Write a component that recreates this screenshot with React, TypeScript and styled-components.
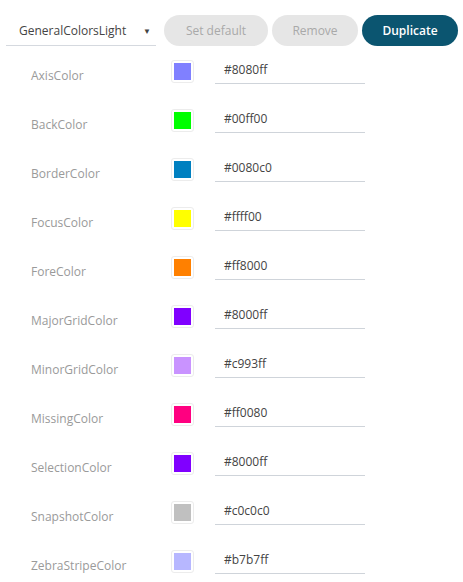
import React from "react";
import styled, { createGlobalStyle } from "styled-components";

const Global = createGlobalStyle`
  html, body { margin: 0; padding: 0; background: #fff; }
  body { font-family: "Open Sans", "Noto Sans", sans-serif; }
`;

const Page = styled.div`
  width: 463px;
  height: 582px;
  overflow: hidden;
  background: #fff;
`;

const Toolbar = styled.div`
  display: flex;
  align-items: center;
  padding: 15px 0 0 6px;
  height: 31px;
`;

const Select = styled.div`
  width: 150px;
  height: 31px;
  box-sizing: border-box;
  border-bottom: 1px solid #d5d9df;
  display: flex;
  align-items: center;
  justify-content: space-between;
  padding: 0 5px 0 13px;
  font-size: 12px;
  color: #444;
  margin-right: 8px;
`;

const Caret = styled.span`
  font-size: 8px;
  color: #444;
`;

const Button = styled.button<{ $primary?: boolean; $w: number }>`
  width: ${(p) => p.$w}px;
  height: 31px;
  border: none;
  border-radius: 16px;
  margin-right: 4px;
  font-family: "Open Sans", "Noto Sans", sans-serif;
  font-size: 12px;
  font-weight: ${(p) => (p.$primary ? 600 : 400)};
  background: ${(p) => (p.$primary ? "#0b5570" : "#e6e6e6")};
  color: ${(p) => (p.$primary ? "#fff" : "#a9a9a9")};
  padding: 0;
`;

const List = styled.div`
  display: flex;
  flex-direction: column;
  padding-top: 14px;
`;

const Row = styled.div`
  display: flex;
  height: 49px;
  align-items: flex-start;
`;

const Label = styled.div`
  width: 140px;
  padding-left: 31px;
  font-size: 12px;
  color: #9a9a9a;
  line-height: 23px;
  padding-top: 4px;
`;

const Swatch = styled.div`
  width: 23px;
  height: 23px;
  box-sizing: border-box;
  border: 1px solid #ececec;
  border-radius: 3px;
  padding: 2px;
  background: #fff;
  margin-right: 21px;
`;

const SwatchFill = styled.div<{ $c: string }>`
  width: 100%;
  height: 100%;
  background: ${(p) => p.$c};
`;

const Input = styled.div`
  width: 150px;
  height: 24px;
  box-sizing: border-box;
  border-bottom: 1px solid #cfd4da;
  padding-left: 9px;
  font-size: 12px;
  color: #444;
  line-height: 20px;
`;

const colors: [string, string][] = [
  ["AxisColor", "#8080ff"],
  ["BackColor", "#00ff00"],
  ["BorderColor", "#0080c0"],
  ["FocusColor", "#ffff00"],
  ["ForeColor", "#ff8000"],
  ["MajorGridColor", "#8000ff"],
  ["MinorGridColor", "#c993ff"],
  ["MissingColor", "#ff0080"],
  ["SelectionColor", "#8000ff"],
  ["SnapshotColor", "#c0c0c0"],
  ["ZebraStripeColor", "#b7b7ff"],
];

export default function App() {
  return (
    <Page>
      <Global />
      <Toolbar>
        <Select>
          <span>GeneralColorsLight</span>
          <Caret>▼</Caret>
        </Select>
        <Button $w={104}>Set default</Button>
        <Button $w={86}>Remove</Button>
        <Button $w={96} $primary>Duplicate</Button>
      </Toolbar>
      <List>
        {colors.map(([name, c]) => (
          <Row key={name}>
            <Label>{name}</Label>
            <Swatch>
              <SwatchFill $c={c} />
            </Swatch>
            <Input>{c}</Input>
          </Row>
        ))}
      </List>
    </Page>
  );
}
